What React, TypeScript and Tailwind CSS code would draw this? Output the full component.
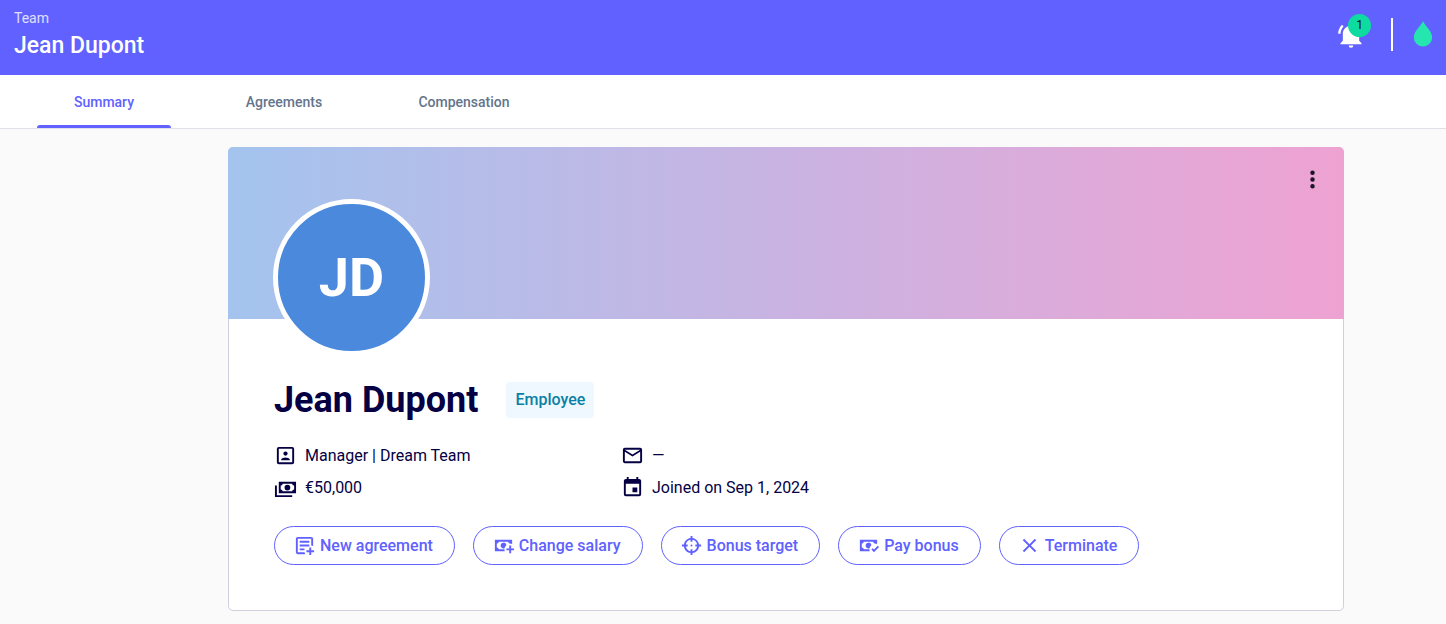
import React from 'react';

interface IconProps {
  path: string;
  className?: string;
}

const ICONS = {
  bell: 'M21,19V20H3V19L5,17V11C5,7.9 7.03,5.17 10,4.29C10,4.19 10,4.1 10,4A2,2 0 0,1 12,2A2,2 0 0,1 14,4C14,4.1 14,4.19 14,4.29C16.97,5.17 19,7.9 19,11V17L21,19M14,21A2,2 0 0,1 12,23A2,2 0 0,1 10,21M19.75,3.19L18.33,4.61C20.04,6.3 21,8.6 21,11H23C23,8.07 21.84,5.25 19.75,3.19M1,11H3C3,8.6 3.96,6.3 5.67,4.61L4.25,3.19C2.16,5.25 1,8.07 1,11Z',
  dots: 'M12,16A2,2 0 0,1 14,18A2,2 0 0,1 12,20A2,2 0 0,1 10,18A2,2 0 0,1 12,16M12,10A2,2 0 0,1 14,12A2,2 0 0,1 12,14A2,2 0 0,1 10,12A2,2 0 0,1 12,10M12,4A2,2 0 0,1 14,6A2,2 0 0,1 12,8A2,2 0 0,1 10,6A2,2 0 0,1 12,4Z',
  accountBox: 'M19,19H5V5H19M19,3H5A2,2 0 0,0 3,5V19A2,2 0 0,0 5,21H19A2,2 0 0,0 21,19V5A2,2 0 0,0 19,3M16.5,16.25C16.5,14.75 13.5,14 12,14C10.5,14 7.5,14.75 7.5,16.25V17H16.5M12,12.25A2.25,2.25 0 0,0 14.25,10A2.25,2.25 0 0,0 12,7.75A2.25,2.25 0 0,0 9.75,10A2.25,2.25 0 0,0 12,12.25Z',
  cash: 'M5,6H23V18H5V6M14,9A3,3 0 0,1 17,12A3,3 0 0,1 14,15A3,3 0 0,1 11,12A3,3 0 0,1 14,9M9,8A2,2 0 0,1 7,10V14A2,2 0 0,1 9,16H19A2,2 0 0,1 21,14V10A2,2 0 0,1 19,8H9M1,10H3V20H19V22H1V10Z',
  email: 'M22 6C22 4.9 21.1 4 20 4H4C2.9 4 2 4.9 2 6V18C2 19.1 2.9 20 4 20H20C21.1 20 22 19.1 22 18V6M20 6L12 11L4 6H20M20 18H4V8L12 13L20 8V18Z',
  calendar: 'M19,19H5V8H19M16,1V3H8V1H6V3H5C3.89,3 3,3.89 3,5V19A2,2 0 0,0 5,21H19A2,2 0 0,0 21,19V5C21,3.89 20.1,3 19,3H18V1M17,12H12V17H17V12Z',
  textBoxPlus: 'M12 21H5C3.89 21 3 20.1 3 19V5C3 3.9 3.9 3 5 3H19C20.1 3 21 3.9 21 5V12.8C20.4 12.4 19.7 12.2 19 12.1V5H5V19H12.1C12.2 19.7 12.4 20.4 12.8 21H12M17 7H7V9H17V7M17 11H7V13H17V11M12 15H7V17H12V15M17 14H19V17H22V19H19V22H17V19H14V17H17V14Z',
  cashPlus: 'M15 15V17H18V20H20V17H23V15H20V12H18V15M14.97 11.61C14.85 10.28 13.59 8.97 12 9C10.3 9.03 9 10.3 9 12C9 13.7 10.3 14.94 12 15C12.38 15 12.77 14.92 13.14 14.77C13.41 13.67 13.86 12.63 14.97 11.61M13 16H7C7 14.9 6.11 14 5 14V10C6.11 10 7 9.11 7 8H17C17 9.11 17.9 10 19 10V10.06C19.67 10.06 20.34 10.18 21 10.4V6H3V18H13.32C13.1 17.33 13 16.66 13 16Z',
  target: 'M11,2V4.07C7.38,4.53 4.53,7.38 4.07,11H2V13H4.07C4.53,16.62 7.38,19.47 11,19.93V22H13V19.93C16.62,19.47 19.47,16.62 19.93,13H22V11H19.93C19.47,7.38 16.62,4.53 13,4.07V2M11,6.08V8H13V6.09C15.5,6.5 17.5,8.5 17.92,11H16V13H17.91C17.5,15.5 15.5,17.5 13,17.92V16H11V17.91C8.5,17.5 6.5,15.5 6.08,13H8V11H6.09C6.5,8.5 8.5,6.5 11,6.08M12,11A1,1 0 0,0 11,12A1,1 0 0,0 12,13A1,1 0 0,0 13,12A1,1 0 0,0 12,11Z',
  cashCheck: 'M3 6V18H13.32C13.1 17.33 13 16.66 13 16H7C7 14.9 6.11 14 5 14V10C6.11 10 7 9.11 7 8H17C17 9.11 17.9 10 19 10V10.06C19.67 10.06 20.34 10.18 21 10.4V6H3M12 9C10.3 9.03 9 10.3 9 12C9 13.7 10.3 14.94 12 15C12.38 15 12.77 14.92 13.14 14.77C13.41 13.67 13.86 12.63 14.97 11.61C14.85 10.28 13.59 8.97 12 9M21.63 12.27L17.76 16.17L16.41 14.8L15 16.22L17.75 19L23.03 13.68L21.63 12.27Z',
  close: 'M19,6.41L17.59,5L12,10.59L6.41,5L5,6.41L10.59,12L5,17.59L6.41,19L12,13.41L17.59,19L19,17.59L13.41,12L19,6.41Z',
};

const TABS = ['Summary', 'Agreements', 'Compensation'];

const DETAILS = [
  { icon: ICONS.accountBox, text: 'Manager | Dream Team' },
  { icon: ICONS.email, text: '—' },
  { icon: ICONS.cash, text: '€50,000' },
  { icon: ICONS.calendar, text: 'Joined on Sep 1, 2024' },
];

const ACTIONS = [
  { icon: ICONS.textBoxPlus, label: 'New agreement' },
  { icon: ICONS.cashPlus, label: 'Change salary' },
  { icon: ICONS.target, label: 'Bonus target' },
  { icon: ICONS.cashCheck, label: 'Pay bonus' },
  { icon: ICONS.close, label: 'Terminate' },
];

const Icon: React.FC<IconProps> = ({ path, className = 'size-[23px]' }) => (
  <svg viewBox="0 0 24 24" fill="currentColor" aria-hidden="true" className={`shrink-0 ${className}`}>
    <path d={path} />
  </svg>
);

const Header: React.FC = () => (
  <header className="flex h-[75px] items-center justify-between bg-[#6061ff] pr-[13px] pl-3.5 text-white">
    <div className="pb-2">
      <p className="text-sm leading-5 text-white/80">Team</p>
      <h1 className="pt-1 text-[23px] leading-7 font-medium">Jean Dupont</h1>
    </div>
    <div className="flex items-center pb-1.5">
      <button type="button" aria-label="Notifications" className="relative mr-[26px]">
        <Icon path={ICONS.bell} className="size-7" />
        {/* Unread count */}
        <span className="absolute -top-[7px] -right-1.5 flex size-[23px] items-center justify-center rounded-full bg-[#0ddba0] text-xs text-[#050038]">
          1
        </span>
      </button>
      <div className="mr-5 h-[33px] w-0.5 bg-white" />
      <button type="button" aria-label="Account">
        <svg viewBox="0 0 20 27" className="h-[27px] w-5" aria-hidden="true">
          <path d="M10 0C8.5 4.5 0.8 10 0.8 16.2A9.2 9.2 0 0 0 19.2 16.2C19.2 10 11.5 4.5 10 0Z" fill="#26e6b0" />
        </svg>
      </button>
    </div>
  </header>
);

const Tabs: React.FC = () => (
  <nav className="flex h-[54px] border-b border-[#e0e0ea] bg-white px-3.5">
    {TABS.map((label, index) => {
      const isCurrent = index === 0;

      return (
        <a
          key={label}
          href="#"
          className={`flex w-[180px] flex-col items-center text-sm font-medium ${isCurrent ? 'text-[#6061ff]' : 'text-[#64748b]'}`}
        >
          <span className="flex flex-1 items-center pt-[3px]">{label}</span>
          <span className={`h-[3px] w-[134px] rounded-t-sm ${isCurrent ? 'bg-[#6061ff]' : ''}`} />
        </a>
      );
    })}
  </nav>
);

const ProfileCard: React.FC = () => (
  <section className="rounded-[5px] border border-[#d0d0de] bg-white">
    {/* Banner, pulled over the card border */}
    <div className="-mx-px -mt-px flex h-[172px] items-start justify-between rounded-t-[5px] bg-linear-to-r from-[#a3c4ee] via-[#c9b3e2] to-[#eea2d2] pr-[18px] pl-[45px]">
      <div className="mt-[52px] flex size-[157px] shrink-0 items-center justify-center rounded-full border-5 border-white bg-[#4a89dc] text-[54px] font-bold text-white">
        JD
      </div>
      <button type="button" aria-label="More actions" className="mt-[19px] text-[#1c1427]">
        <Icon path={ICONS.dots} className="size-[27px]" />
      </button>
    </div>

    <div className="px-[45px] pt-[62px] pb-[45px]">
      <div className="flex items-center gap-7">
        <h2 className="text-4xl leading-[38px] font-bold text-[#050044]">Jean Dupont</h2>
        <span className="rounded bg-[#f0f8ff] px-[9px] py-1.5 text-base font-medium text-[#0b80a5]">Employee</span>
      </div>

      <div className="mt-6 grid max-w-[694px] grid-cols-2 gap-y-2 text-base text-[#050044]">
        {DETAILS.map(({ icon, text }) => (
          <div key={text} className="flex items-center gap-2">
            <Icon path={icon} />
            <span className="pt-px leading-[23px]">{text}</span>
          </div>
        ))}
      </div>

      <div className="mt-[27px] flex flex-wrap gap-[18px]">
        {ACTIONS.map(({ icon, label }) => (
          <button
            key={label}
            type="button"
            className="flex h-[39px] items-center gap-1 rounded-full border border-[#6061ff] pr-[21px] pl-[18px] text-base font-medium text-[#6061ff]"
          >
            <Icon path={icon} />
            {label}
          </button>
        ))}
      </div>
    </div>
  </section>
);

const App: React.FC = () => {
  return (
    <div className="min-h-screen bg-[#fafafa] font-[Roboto,sans-serif]">
      <Header />
      <Tabs />
      <main className="pt-[18px] pr-[102px] pb-3 pl-[228px]">
        <ProfileCard />
      </main>
    </div>
  );
};

export default App;
